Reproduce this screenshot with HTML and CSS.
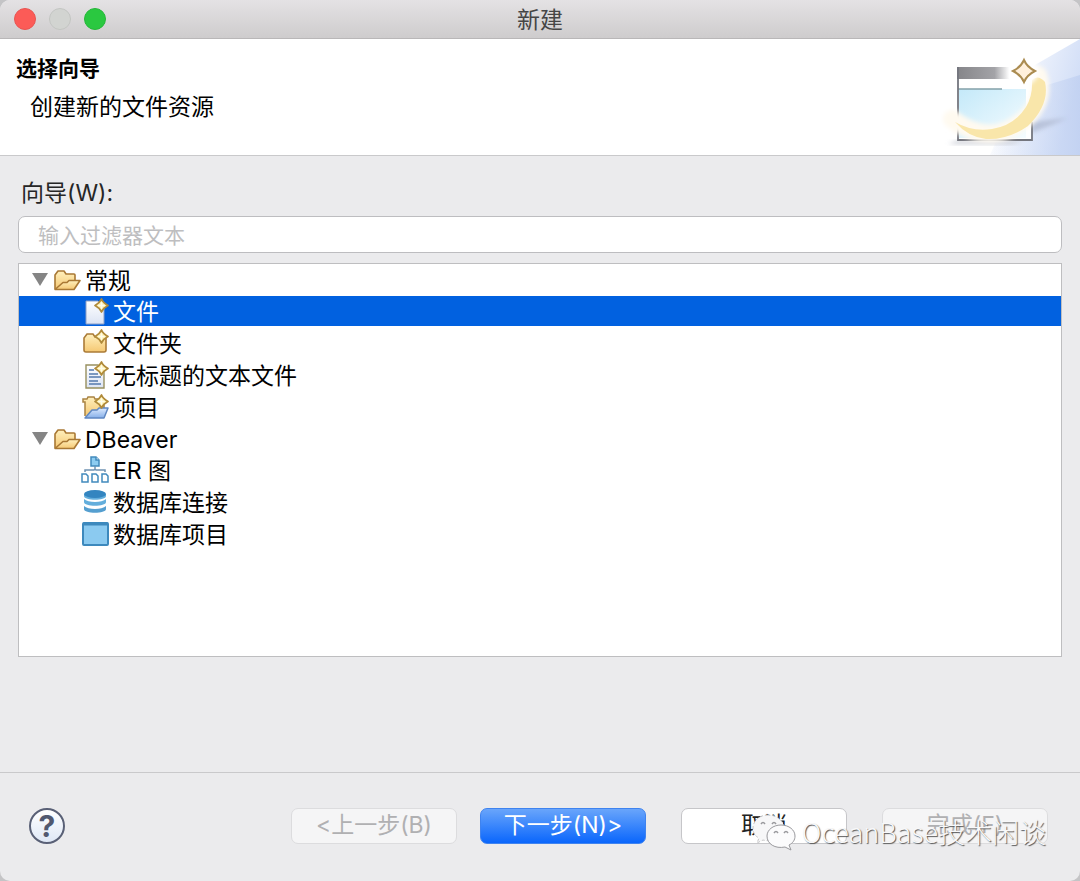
FILE: index.html
```html
<!DOCTYPE html>
<html lang="zh-CN">

<head>
    <meta charset="UTF-8">
    <meta name="viewport" content="width=device-width, initial-scale=1.0">
    <link rel="stylesheet" href="styles.css">
    <title>新建</title>
</head>

<body>
    <!-- shared icon shapes -->
    <svg class="defs" width="0" height="0" aria-hidden="true">
        <defs>
            <linearGradient id="gold" x1="0" y1="0" x2="0" y2="1">
                <stop offset="0" stop-color="#fff0bd" />
                <stop offset="1" stop-color="#f5c873" />
            </linearGradient>
            <linearGradient id="paper" x1="0" y1="0" x2="0" y2="1">
                <stop offset="0" stop-color="#ffffff" />
                <stop offset="1" stop-color="#dce4f4" />
            </linearGradient>
            <linearGradient id="sky" x1="0" y1="0" x2="0" y2="1">
                <stop offset="0" stop-color="#dceaff" />
                <stop offset="1" stop-color="#86afe8" />
            </linearGradient>
            <symbol id="folder-open" viewBox="0 0 28 28">
                <path d="M2 22V8l3-4h6l2 3h8q1 0 1 1v5" fill="url(#gold)" stroke="#a97834" stroke-width="1.6" stroke-linejoin="round" />
                <path d="M2 22.500l8-7h4l2-2h11l-6 9z" fill="url(#gold)" stroke="#a97834" stroke-width="1.6" stroke-linejoin="round" />
            </symbol>
            <symbol id="sparkle" viewBox="0 0 14 14">
                <path d="M7 1Q8 4 13 7Q9 9 7 13Q5 9 1 7Q5 5 7 1z" fill="#fff0ae" stroke="#b08a3a" stroke-width="1.7" stroke-linejoin="round" />
                <path d="M7 4v6M4 7h6" stroke="#fffdec" stroke-width="1.4" />
            </symbol>
        </defs>
    </svg>

    <div class="dialog">
        <div class="titlebar">
            <div class="lights">
                <button class="light close" aria-label="关闭"></button>
                <button class="light minimize" aria-label="最小化" disabled></button>
                <button class="light maximize" aria-label="缩放"></button>
            </div>
            <div class="title">新建</div>
        </div>

        <header class="banner">
            <div class="banner-text">
                <h1>选择向导</h1>
                <p>创建新的文件资源</p>
            </div>
            <svg class="banner-art" viewBox="0 0 150 116" aria-hidden="true">
                <defs>
                    <linearGradient id="beam" x1="0.1" y1="0" x2="1" y2="0.3">
                        <stop offset="0.1" stop-color="#ffffff" />
                        <stop offset="1" stop-color="#d3dff7" />
                    </linearGradient>
                    <linearGradient id="beam2" x1="0" y1="0" x2="1" y2="0">
                        <stop offset="0" stop-color="#d9e3f8" stop-opacity="0" />
                        <stop offset="1" stop-color="#bccdf0" />
                    </linearGradient>
                    <linearGradient id="bar" x1="0" y1="0" x2="1" y2="0">
                        <stop offset="0" stop-color="#858589" />
                        <stop offset=".5" stop-color="#a3a3a7" />
                        <stop offset=".7" stop-color="#ffffff" />
                    </linearGradient>
                    <linearGradient id="glass" x1="0" y1="0" x2="1" y2="1">
                        <stop offset="0" stop-color="#c4e9f9" />
                        <stop offset="1" stop-color="#f5fcff" />
                    </linearGradient>
                    <filter id="soft" x="-20%" y="-50%" width="140%" height="200%">
                        <feGaussianBlur stdDeviation="2" />
                    </filter>
                </defs>
                <path d="M60 116L98 30L150 0V116z" fill="url(#beam)" />
                <path d="M60 116L104 50L150 36V116z" fill="url(#beam2)" opacity=".7" />
                <path d="M100 83l38-4-36 15z" fill="#b1bbd3" filter="url(#soft)" opacity=".8" />
                <path d="M18 105l9-3h68l-14 3z" fill="#c6c9d2" filter="url(#soft)" />
                <path d="M27 28h75v73H27z" fill="#ffffff" />
                <path d="M27 28h75v12H27z" fill="url(#bar)" />
                <path d="M29 50h67v49H29z" fill="url(#glass)" />
                <path d="M28 50h44" stroke="#83a1a9" stroke-width="1.5" />
                <path d="M28 28v73h74V83" fill="none" stroke="#74767e" stroke-width="1.8" />
                <path d="M22 80Q62 110 96 79Q116 59 108 36" fill="none" stroke="#fffaf0" stroke-width="18" stroke-linecap="round" filter="url(#soft)" />
                <path d="M102 41Q108 35 115 43Q120 65 98 87Q78 101 56 100Q38 98 25 83Q42 93 62 90Q84 87 96 68Q103 56 102 41z" fill="#f9e6aa" />
                <circle cx="94" cy="32" r="14" fill="#ffffff" filter="url(#soft)" />
                <path d="M94 21Q97 28 105 32Q97 36 94 43Q91 36 83 32Q91 28 94 21z" fill="#fff0dc" stroke="#ab8c51" stroke-width="2" />
            </svg>
        </header>

        <main class="content">
            <label class="label" for="filter">向导(W):</label>
            <input class="filter" id="filter" type="text" placeholder="输入过滤器文本">

            <ul class="tree" role="tree" aria-label="向导">
                <li role="treeitem" aria-expanded="true">
                    <div class="group">
                        <span class="arrow"></span>
                        <svg class="icon"><use href="#folder-open" /></svg>
                        <span>常规</span>
                    </div>
                    <ul role="group">
                        <li class="item selected" role="treeitem" aria-selected="true">
                            <svg class="icon" viewBox="0 0 28 28">
                                <path d="M5 4h12l6 6v17H5z" fill="url(#paper)" stroke="#8c9fc6" />
                                <use href="#sparkle" x="13" y="1" width="15" height="15" />
                            </svg>
                            <span>文件</span>
                        </li>
                        <li class="item" role="treeitem">
                            <svg class="icon" viewBox="0 0 28 28">
                                <path d="M3 21V9l3-4h6l2 3h11v13q0 2-2 2H5q-2 0-2-2z" fill="url(#gold)" stroke="#ab7b37" stroke-width="1.6" />
                                <use href="#sparkle" x="13" y="0" width="15" height="15" />
                            </svg>
                            <span>文件夹</span>
                        </li>
                        <li class="item" role="treeitem">
                            <svg class="icon" viewBox="0 0 28 28">
                                <path d="M5 4h12l6 6v17H5z" fill="url(#paper)" stroke="#98905f" stroke-width="1.4" />
                                <path d="M8 9h5M8 13h9M8 16h12M8 20h9M8 23h12" stroke="#5479ad" stroke-width="1.5" />
                                <use href="#sparkle" x="13" y="0" width="15" height="15" />
                            </svg>
                            <span>无标题的文本文件</span>
                        </li>
                        <li class="item" role="treeitem">
                            <svg class="icon" viewBox="0 0 28 28">
                                <path d="M4 23V9H2V6h4l1-2h6l1 2h9v9" fill="url(#gold)" stroke="#a98343" stroke-width="1.5" />
                                <path d="M4 25l7-8h5l2-2h9l-4 10z" fill="url(#sky)" stroke="#5f87c2" stroke-width="1.5" stroke-linejoin="round" />
                                <use href="#sparkle" x="13" y="1" width="15" height="15" />
                            </svg>
                            <span>项目</span>
                        </li>
                    </ul>
                </li>
                <li role="treeitem" aria-expanded="true">
                    <div class="group">
                        <span class="arrow"></span>
                        <svg class="icon"><use href="#folder-open" /></svg>
                        <span>DBeaver</span>
                    </div>
                    <ul role="group">
                        <li class="item" role="treeitem">
                            <svg class="icon" viewBox="0 0 28 28" fill="#ffffff" stroke="#428abd" stroke-width="1.5">
                                <path d="M10 1h5l3 3v6h-8z" fill="#8dccf1" />
                                <path d="M15 1v3h3" fill="#ffffff" />
                                <path d="M14 10v3M4 16v-2h9l1-1 1 1h9v2" fill="none" stroke="#6f92b2" />
                                <path d="M1 18h4l2 2v6H1zM11 18h4l2 2v6h-6zM21 18h4l2 2v6h-6z" />
                            </svg>
                            <span>ER 图</span>
                        </li>
                        <li class="item" role="treeitem">
                            <svg class="icon" viewBox="0 0 28 28">
                                <path d="M3 18v3c0 5 22 5 22 0v-3c-4 4-18 4-22 0z" fill="#559fd0" />
                                <path d="M3 11v3c0 5 22 5 22 0v-3c-4 4-18 4-22 0z" fill="#63aedc" />
                                <path d="M3 6v2c0 5 22 5 22 0V6z" fill="#63aedc" />
                                <ellipse cx="14" cy="6" rx="11" ry="4" fill="#3385c0" />
                            </svg>
                            <span>数据库连接</span>
                        </li>
                        <li class="item" role="treeitem">
                            <svg class="icon" viewBox="0 0 28 28">
                                <rect x="2" y="3" width="25" height="22" rx="1" fill="#8bcaf0" stroke="#3d89bd" stroke-width="2" />
                                <path d="M2 4h25" stroke="#3d89bd" stroke-width="3" />
                            </svg>
                            <span>数据库项目</span>
                        </li>
                    </ul>
                </li>
            </ul>
        </main>

        <footer class="footer">
            <button class="help" aria-label="帮助">?</button>
            <div class="buttons">
                <button class="btn" disabled>&lt;上一步(B)</button>
                <button class="btn primary">下一步(N)&gt;</button>
                <button class="btn">取消</button>
                <button class="btn" disabled>完成(F)</button>
            </div>
            <div class="watermark">
                <svg viewBox="0 0 44 38" aria-hidden="true">
                    <path d="M16 2C7 2 1 8 1 15c0 5 2 8 6 10l-2 5 6-3c13 3 21-3 21-12C32 8 25 2 16 2z" fill="#f7f7f8" stroke="#c5c5c7" stroke-dasharray="3 2" />
                    <path d="M29 12c-8 0-14 5-14 11 0 8 8 13 18 11l6 3-2-5c4-2 6-5 6-9 0-6-6-11-14-11z" fill="#fbfbfc" stroke="#99999d" />
                    <path d="M9 11q2-3 4 0M20 11q2-3 4 0M22 20q2-3 4 0M32 20q2-3 4 0" fill="none" stroke="#99999d" stroke-width="1.5" />
                </svg>
                <span>OceanBase技术闲谈</span>
            </div>
        </footer>
    </div>
</body>

</html>
```
FILE: styles.css
```css
* {
    margin: 0;
    padding: 0;
    box-sizing: border-box;
}

body {
    background: #c4c4c6;
    font-family: Inter, "Noto Sans CJK SC", sans-serif;
    font-size: 23px;
    line-height: 32px;
    color: #000;
}

button,
input {
    font: inherit;
}

ul {
    list-style: none;
}

.defs {
    position: absolute;
}

.dialog {
    min-height: 100vh;
    display: flex;
    flex-direction: column;
    background: #ebebed;
    border-radius: 10px;
    overflow: hidden;
}

/* title bar */
.titlebar {
    display: grid;
    grid-template-columns: 1fr auto 1fr;
    align-items: center;
    height: 39px;
    padding: 0 14px;
    background: linear-gradient(to bottom, #e4e2e4, #cecccd);
    border-bottom: 1px solid #b9b7b8;
}

.lights {
    display: flex;
    gap: 13px;
}

.light {
    width: 22px;
    height: 22px;
    border: 1px solid #c3c5c2;
    border-radius: 50%;
    background: #d2d4d1;
}

.close {
    background: #fc5b57;
    border-color: #e85451;
}

.maximize {
    background: #2ac840;
    border-color: #25b739;
}

.title {
    padding-top: 2px;
    color: #454545;
}

/* banner */
.banner {
    display: flex;
    justify-content: space-between;
    height: 117px;
    background: #fff;
    border-bottom: 1px solid #c9c9cb;
}

.banner-text {
    padding: 14px 16px;
}

.banner h1 {
    font-size: 21px;
    line-height: 32px;
}

.banner p {
    padding: 6px 14px;
}

.banner-art {
    width: 150px;
    height: 116px;
}

/* wizard list */
.content {
    flex: 1;
    display: flex;
    flex-direction: column;
    padding: 21px 18px 0;
}

.label {
    padding-left: 3px;
    color: #262626;
}

.filter {
    height: 37px;
    margin: 7px 0 10px;
    padding: 1px 19px 0;
    font-size: 21px;
    background: #fff;
    border: 1px solid #bdbdc0;
    border-radius: 7px;
}

.filter::placeholder {
    color: #bebec0;
}

.tree {
    min-height: 394px;
    padding-top: 1px;
    background: #fff;
    border: 1px solid #bebec0;
}

.group,
.item {
    display: flex;
    align-items: center;
}

.group {
    height: 31px;
    padding-left: 13px;
}

.item {
    height: 30px;
    margin-bottom: 2px;
    padding-left: 62px;
}

.item span {
    padding-top: 2px;
}

.selected {
    background: #0161e0;
    color: #fff;
}

.arrow {
    width: 16px;
    height: 13px;
    margin: 0 5px 2px 0;
    background: #858585;
    clip-path: polygon(0 0, 100% 0, 50% 100%);
}

.icon {
    flex: none;
    width: 28px;
    height: 28px;
    margin-right: 4px;
}

/* button bar */
.footer {
    position: relative;
    display: flex;
    align-items: center;
    justify-content: space-between;
    height: 109px;
    padding: 0 32px 2px 29px;
    border-top: 1px solid #c9c9cb;
}

.help {
    width: 36px;
    height: 36px;
    background: linear-gradient(to bottom, #fff, #dfe8f6);
    border: 2px solid #596076;
    border-radius: 50%;
    color: #515970;
    font-size: 30px;
    font-weight: bold;
    line-height: 32px;
}

.buttons {
    display: flex;
    gap: 35px;
}

.btn {
    width: 166px;
    height: 36px;
    padding-bottom: 2px;
    background: #fff;
    border: 1px solid #c6c6c9;
    border-radius: 7px;
    color: #222;
}

.btn:disabled {
    background: #f5f5f6;
    border-color: #dcdcde;
    color: #b0b0b2;
}

.primary {
    margin-left: -12px;
    background: linear-gradient(to bottom, #69a5fb, #0a66fc);
    border-color: #3f83ef;
    color: #fff;
}

.watermark {
    position: absolute;
    right: 34px;
    bottom: 30px;
    display: flex;
    align-items: center;
    gap: 6px;
    color: #f8f8f9;
    font-family: "Noto Sans CJK SC", sans-serif;
    font-size: 27px;
    font-weight: 300;
    text-shadow: 1px 1px 1px #555;
    pointer-events: none;
}

.watermark svg {
    width: 44px;
    height: 38px;
}
```
